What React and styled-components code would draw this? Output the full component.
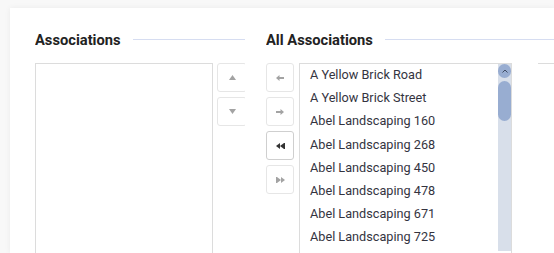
import React from 'react'
import styled, { createGlobalStyle } from 'styled-components'

const GlobalStyle = createGlobalStyle`
    html, body {
        margin: 0;
        padding: 0;
        background: #f8f8f8;
        overflow: hidden;
    }
    body {
        font-family: Roboto, "Noto Sans", sans-serif;
        color: #333;
    }
`

const Card = styled.div`
    margin: 8px 0 0 10px;
    height: 245px;
    background: #fff;
    box-shadow: 0 0 6px rgba(0, 0, 0, 0.06);
    padding: 23px 0 0 25px;
    box-sizing: border-box;
    display: flex;
    gap: 21px;
    overflow: hidden;
`

const Column = styled.div`
    width: ${p => p.$width}px;
    flex: none;
    overflow: hidden;
    display: flex;
    flex-direction: column;
`

const Heading = styled.div`
    display: flex;
    align-items: center;
    gap: 12px;
    height: 17px;
    margin-bottom: 15px;
`

const Title = styled.h3`
    margin: 0;
    font-size: 14.7px;
    font-weight: 700;
    color: #222;
    white-space: nowrap;
`

const Rule = styled.div`
    flex: 1;
    height: 1px;
    background: #d6ddf1;
`

const Body = styled.div`
    display: flex;
    gap: ${p => p.$gap}px;
    align-items: flex-start;
`

const ListBox = styled.div`
    width: ${p => p.$width}px;
    height: 200px;
    flex: none;
    border: 1px solid #dcdcdc;
    box-sizing: border-box;
    display: flex;
    background: #fff;
`

const Items = styled.ul`
    list-style: none;
    margin: -1px 0 0;
    padding: 0 0 0 10px;
    flex: 1;
    overflow: hidden;
`

const Item = styled.li`
    font-size: 12.7px;
    line-height: 23.2px;
    color: #34343f;
    white-space: nowrap;
`

const Track = styled.div`
    width: 13px;
    height: 187px;
    flex: none;
    background: #d8dfea;
    display: flex;
    flex-direction: column;
    align-items: center;
    gap: 3px;
`

const ScrollButton = styled.div`
    width: 13px;
    height: 14px;
    border-radius: 7px;
    background: #98add1;
    display: flex;
    align-items: center;
    justify-content: center;
`

const Thumb = styled.div`
    width: 13px;
    height: 40px;
    border-radius: 7px;
    background: #98add1;
`

const ButtonStack = styled.div`
    display: flex;
    flex-direction: column;
    gap: 5px;
    flex: none;
`

const MoveButton = styled.button`
    width: ${p => p.$width || 28}px;
    height: 29px;
    padding: 0;
    background: #fff;
    border: 1px solid ${p => (p.$active ? '#cfcfcf' : '#e6e6e6')};
    border-radius: 3px;
    display: flex;
    align-items: center;
    justify-content: center;
    box-sizing: border-box;
    color: ${p => (p.$active ? '#333' : '#a3a3a3')};
    cursor: pointer;
`

const TopEdge = styled.div`
    width: 40px;
    height: 190px;
    border-top: 1px solid #dcdcdc;
    margin-left: 21px;
    flex: none;
`

const Up = () => (
    <svg width="7" height="5" viewBox="0 0 7 5"><polygon points="0,5 3.5,0 7,5" fill="currentColor" /></svg>
)
const Down = () => (
    <svg width="7" height="5" viewBox="0 0 7 5"><polygon points="0,0 7,0 3.5,5" fill="currentColor" /></svg>
)
const Left = () => (
    <svg width="8" height="6" viewBox="0 0 8 6"><polygon points="0,3 3.5,0 3.5,2 8,2 8,4 3.5,4 3.5,6" fill="currentColor" /></svg>
)
const Right = () => (
    <svg width="8" height="6" viewBox="0 0 8 6"><polygon points="8,3 4.5,0 4.5,2 0,2 0,4 4.5,4 4.5,6" fill="currentColor" /></svg>
)
const AllLeft = () => (
    <svg width="9" height="6" viewBox="0 0 9 6"><polygon points="0,3 4,0 4,6" fill="currentColor" /><polygon points="4,3 8,0 8,6" fill="currentColor" /><rect x="8" y="0" width="1" height="6" fill="currentColor" /></svg>
)
const AllRight = () => (
    <svg width="9" height="6" viewBox="0 0 9 6"><rect x="0" y="0" width="1" height="6" fill="currentColor" /><polygon points="1,0 5,3 1,6" fill="currentColor" /><polygon points="5,0 9,3 5,6" fill="currentColor" /></svg>
)
const Caret = () => (
    <svg width="6" height="4" viewBox="0 0 6 4"><polyline points="0.5,3.5 3,1 5.5,3.5" fill="none" stroke="#3d4a63" strokeWidth="1" /></svg>
)

const all = [
    'A Yellow Brick Road',
    'A Yellow Brick Street',
    'Abel Landscaping 160',
    'Abel Landscaping 268',
    'Abel Landscaping 450',
    'Abel Landscaping 478',
    'Abel Landscaping 671',
    'Abel Landscaping 725',
]

const App = () => {
    return (
        <>
            <GlobalStyle />
            <Card>
                <Column $width={210}>
                    <Heading>
                        <Title>Associations</Title>
                        <Rule />
                    </Heading>
                    <Body $gap={4}>
                        <ListBox $width={178} />
                        <ButtonStack>
                            <MoveButton $width={30}><Up /></MoveButton>
                            <MoveButton $width={30}><Down /></MoveButton>
                        </ButtonStack>
                    </Body>
                </Column>
                <Column $width={400}>
                    <Heading>
                        <Title>All Associations</Title>
                        <Rule />
                    </Heading>
                    <Body $gap={5}>
                        <ButtonStack>
                            <MoveButton><Left /></MoveButton>
                            <MoveButton><Right /></MoveButton>
                            <MoveButton $active><AllLeft /></MoveButton>
                            <MoveButton><AllRight /></MoveButton>
                        </ButtonStack>
                        <ListBox $width={213}>
                            <Items>
                                {all.map(name => <Item key={name}>{name}</Item>)}
                            </Items>
                            <Track>
                                <ScrollButton><Caret /></ScrollButton>
                                <Thumb />
                            </Track>
                        </ListBox>
                        <TopEdge />
                    </Body>
                </Column>
            </Card>
        </>
    )
}

export default App
